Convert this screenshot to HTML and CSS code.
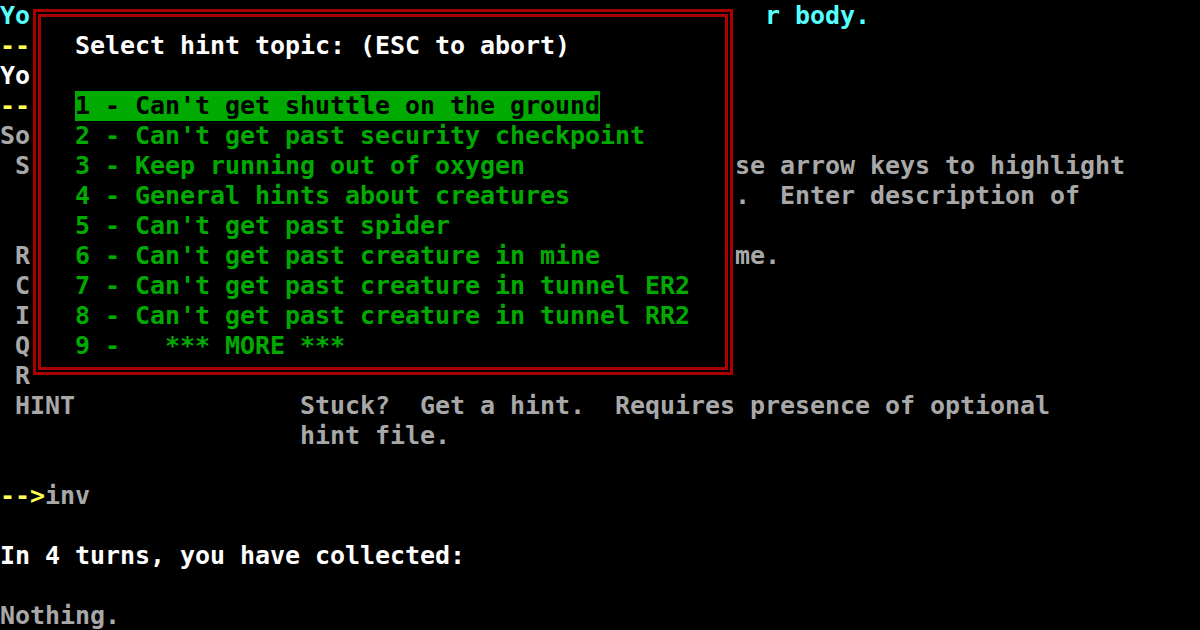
FILE: index.html
```html
<!DOCTYPE html>
<html>
<head>
<meta charset="utf-8">
<link rel="stylesheet" href="styles.css">
</head>
<body>
<div class="screen">
<div class="row cyan"><span class="w51">Yo</span><span>r body.</span></div>
<div class="row yellow">--</div>
<div class="row white">Yo</div>
<div class="row yellow">--</div>
<div class="row gray">So</div>
<div class="row gray"><span class="w49"> S</span><span>se arrow keys to highlight</span></div>
<div class="row gray"><span class="w49"></span><span>.  Enter description of</span></div>
<div class="row gray"></div>
<div class="row gray"><span class="w49"> R</span><span>me.</span></div>
<div class="row gray"> C</div>
<div class="row gray"> I</div>
<div class="row gray"> Q</div>
<div class="row gray"> R</div>
<div class="row gray"><span class="w20"> HINT</span><span>Stuck?  Get a hint.  Requires presence of optional</span></div>
<div class="row gray"><span class="w20"></span><span>hint file.</span></div>
<div class="row gray"></div>
<div class="row gray"><span class="yellow">--&gt;</span>inv</div>
<div class="row gray"></div>
<div class="row white">In 4 turns, you have collected:</div>
<div class="row gray"></div>
<div class="row gray">Nothing.</div>

<div class="hintbox">
<div class="row white">Select hint topic: (ESC to abort)</div>
<div class="row"></div>
<div class="row green"><span class="sel">1 - Can't get shuttle on the ground</span></div>
<div class="row green">2 - Can't get past security checkpoint</div>
<div class="row green">3 - Keep running out of oxygen</div>
<div class="row green">4 - General hints about creatures</div>
<div class="row green">5 - Can't get past spider</div>
<div class="row green">6 - Can't get past creature in mine</div>
<div class="row green">7 - Can't get past creature in tunnel ER2</div>
<div class="row green">8 - Can't get past creature in tunnel RR2</div>
<div class="row green">9 -   *** MORE ***</div>
</div>
</div>
</body>
</html>
```

FILE: styles.css
```css
html, body {
  margin: 0;
  padding: 0;
  background: #000;
  width: 1200px;
  height: 630px;
  overflow: hidden;
}

.screen {
  position: relative;
  width: 1200px;
  height: 630px;
  font-family: "DejaVu Sans Mono", "Liberation Mono", monospace;
  font-weight: bold;
  font-size: 25px;
  letter-spacing: -0.05px;
  padding-top: 1px;
  box-sizing: border-box;
}

.row {
  display: flex;
  height: 30px;
  line-height: 30px;
  white-space: pre;
}

/* leading cells: each text cell is 15px wide */
.w20 { flex: none; width: 300px; }
.w49 { flex: none; width: 735px; }
.w51 { flex: none; width: 765px; }

.cyan { color: #55ffff; }
.yellow { color: #ffff55; }
.white { color: #ffffff; }
.gray { color: #a8a8a8; }
.green { color: #00aa00; }

.hintbox {
  position: absolute;
  left: 33px;
  top: 9px;
  width: 700px;
  height: 366px;
  box-sizing: border-box;
  background: #000;
  border: 8px double #aa0000;
  padding: 14px 0 0 34px;
  z-index: 2;
}

.sel {
  display: inline-block;
  height: 30px;
  background: #00aa00;
  color: #000;
}
```
